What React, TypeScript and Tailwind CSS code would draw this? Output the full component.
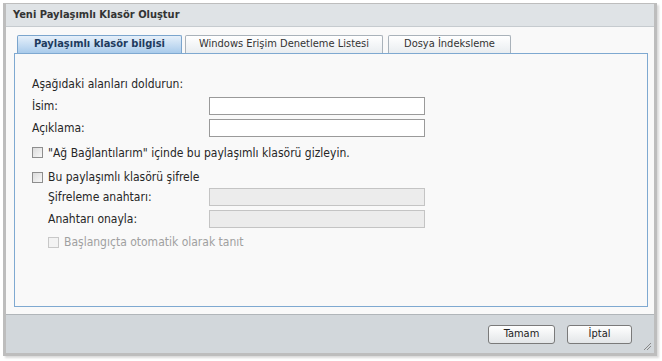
import React from "react";

const font = { fontFamily: '"DejaVu Sans Condensed", "DejaVu Sans", sans-serif' };

function CheckBox({ disabled = false }: { disabled?: boolean }) {
  return (
    <div
      className={
        "w-[11px] h-[11px] shrink-0 border " +
        (disabled
          ? "border-[#c8c8c8] bg-[#f3f3f3]"
          : "border-[#8e8e8e] bg-gradient-to-br from-[#dcdcdc] to-[#f8f8f8]")
      }
    />
  );
}

function Input({ disabled = false }: { disabled?: boolean }) {
  return (
    <div
      className={
        "w-[216px] h-[18px] border " +
        (disabled ? "border-[#c4c4c4] bg-[#ececec]" : "border-[#9a9a9a] bg-white")
      }
    />
  );
}

export default function App() {
  return (
    <div className="w-[662px] h-[361px] bg-white pt-[3px] pl-[3px] text-[11px] text-[#262626]" style={font}>
      <div className="w-[654px] h-[353px] flex flex-col border-l-[3px] border-t border-r-[3px] border-b-[3px] border-[#bdbdbd] shadow-[2px_2px_2px_rgba(0,0,0,0.15)]">
        {/* Header */}
        <div className="h-[23px] shrink-0 bg-[#dfe3e6] border-b border-[#c6cbcf] flex items-center pl-[7px]">
          <span className="font-bold text-[#333]">Yeni Paylaşımlı Klasör Oluştur</span>
        </div>
        {/* Body */}
        <div className="flex-1 bg-[#f9f9f9] flex flex-col pt-[8px] pl-[8px] pr-[6px] pb-[7px]">
          {/* Tabs */}
          <div className="flex items-end h-[18px] pl-[3px] gap-[3px]">
            <div className="h-[18px] w-[165px] border border-b-0 border-[#7ba5cd] rounded-t-[2px] bg-gradient-to-b from-[#e6f0fa] to-[#a9cbeb] flex items-center justify-center font-bold text-[#1e3b5e]">
              Paylaşımlı klasör bilgisi
            </div>
            <div className="h-[18px] w-[198px] border border-b-0 border-[#a9b2ba] rounded-t-[2px] bg-gradient-to-b from-white to-[#e9edf0] flex items-center justify-center text-[#333]">
              Windows Erişim Denetleme Listesi
            </div>
            <div className="ml-[2px] h-[18px] w-[123px] border border-b-0 border-[#a9b2ba] rounded-t-[2px] bg-gradient-to-b from-white to-[#e9edf0] flex items-center justify-center text-[#333]">
              Dosya İndeksleme
            </div>
          </div>
          {/* Panel */}
          <div className="flex-1 border border-[#7fa9d1] bg-[#f9f9f9] pl-[17px] pt-[20px] flex flex-col text-[12px]">
            <div className="h-[20px] flex items-center">Aşağıdaki alanları doldurun:</div>
            <div className="h-[23px] flex items-center">
              <div className="w-[177px]">İsim:</div>
              <Input />
            </div>
            <div className="h-[22px] flex items-center">
              <div className="w-[177px]">Açıklama:</div>
              <Input />
            </div>
            <div className="h-[27px] flex items-center gap-[5px]">
              <CheckBox />
              <span>"Ağ Bağlantılarım" içinde bu paylaşımlı klasörü gizleyin.</span>
            </div>
            <div className="h-[22px] flex items-center gap-[5px]">
              <CheckBox />
              <span>Bu paylaşımlı klasörü şifrele</span>
            </div>
            <div className="h-[18px] flex items-center pl-[16px]">
              <div className="w-[161px]">Şifreleme anahtarı:</div>
              <Input disabled />
            </div>
            <div className="mt-[3px] h-[19px] flex items-center pl-[16px]">
              <div className="w-[161px]">Anahtarı onayla:</div>
              <Input disabled />
            </div>
            <div className="h-[28px] flex items-center pl-[16px] gap-[5px] text-[#a0a0a0]">
              <CheckBox disabled />
              <span>Başlangıçta otomatik olarak tanıt</span>
            </div>
          </div>
        </div>
        {/* Footer */}
        <div className="relative h-[39px] shrink-0 bg-[#d2d7db] border-t border-[#b0b5b9] flex items-center justify-end gap-[12px] pr-[22px]">
          <button className="w-[67px] h-[19px] rounded-[3px] border border-[#7a7a7a] bg-gradient-to-b from-white to-[#e3e6e8] text-[#222]" style={font}>
            Tamam
          </button>
          <button className="w-[65px] h-[19px] rounded-[3px] border border-[#7a7a7a] bg-gradient-to-b from-white to-[#e3e6e8] text-[#222]" style={font}>
            İptal
          </button>
          <svg className="absolute right-[2px] bottom-[2px]" width="9" height="9" viewBox="0 0 9 9">
            <line x1="1" y1="8" x2="8" y2="1" stroke="#888" strokeWidth="1" />
            <line x1="4" y1="8" x2="8" y2="4" stroke="#888" strokeWidth="1" />
          </svg>
        </div>
      </div>
    </div>
  );
}
